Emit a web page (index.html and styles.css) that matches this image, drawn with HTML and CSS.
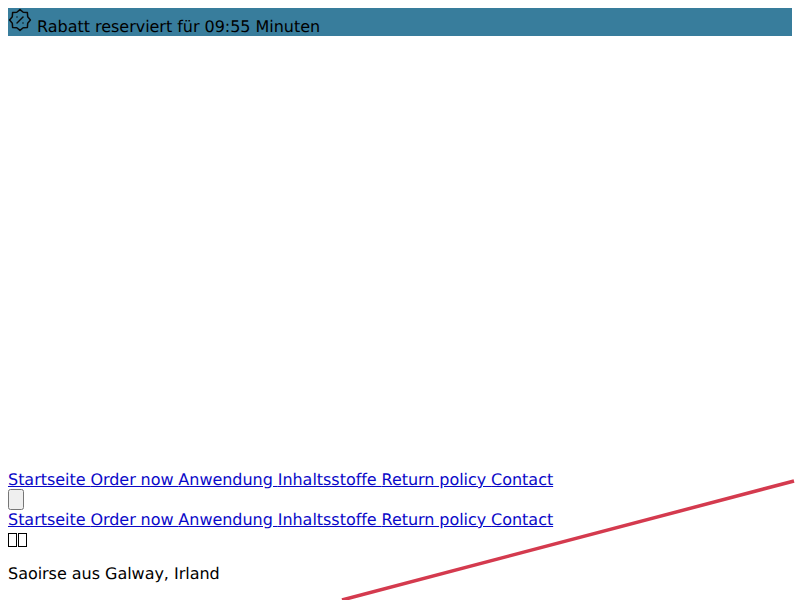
FILE: index.html
```html
<!DOCTYPE html>
<html lang="de">
  <head>
    <meta charset="utf-8" />
    <title>Rabatt</title>
    <link rel="stylesheet" href="styles.css">
  </head>
  <body>
    <!-- Promo bar -->
    <div class="promo-bar">
      <svg class="promo-icon" xmlns="http://www.w3.org/2000/svg" width="24" height="24" viewBox="0 0 24 24" fill="none" stroke="currentColor" stroke-width="1.5" stroke-linecap="round" stroke-linejoin="round">
        <path d="M12 1.6L15.2 4.3L19.4 4.6L19.7 8.8L22.4 12L19.7 15.2L19.4 19.4L15.2 19.7L12 22.4L8.8 19.7L4.6 19.4L4.3 15.2L1.6 12L4.3 8.8L4.6 4.6L8.8 4.3Z"></path>
        <path d="M15 9l-6 6"></path>
        <path d="M9 9h.01"></path>
        <path d="M15 15h.01"></path>
      </svg>
      <span>Rabatt reserviert für 09:55 Minuten</span>
    </div>

    <!-- Hero image never loaded, only its space is left -->
    <div class="hero-space"></div>

    <nav class="site-nav">
      <a href="#">Startseite </a><a href="#">Order now </a><a href="#">Anwendung </a><a href="#">Inhaltsstoffe </a><a href="#">Return policy </a><a href="#">Contact</a>
    </nav>
    <button class="menu-toggle" type="button"></button>
    <nav class="site-nav">
      <a href="#">Startseite </a><a href="#">Order now </a><a href="#">Anwendung </a><a href="#">Inhaltsstoffe </a><a href="#">Return policy </a><a href="#">Contact</a>
    </nav>

    <!-- Flag glyphs show as missing-character boxes -->
    <div class="flag"><span class="tofu"></span><span class="tofu"></span></div>
    <p class="review-author">Saoirse aus Galway, Irland</p>

    <!-- Red diagonal over the page -->
    <svg class="red-line" xmlns="http://www.w3.org/2000/svg" width="470" height="130" viewBox="0 0 470 130">
      <line x1="12" y1="130" x2="464" y2="11" stroke="#d43a4e" stroke-width="3.5"></line>
    </svg>
  </body>
</html>
```

FILE: styles.css
```css
html {
  overflow: hidden;
}

body {
  margin: 8px;
  font-family: "DejaVu Sans", sans-serif;
  font-size: 16px;
  letter-spacing: -0.03px;
  text-rendering: geometricPrecision;
  color: #000;
  background: #fff;
}

a {
  color: #0a08c8;
}

/* Promo bar */
.promo-bar {
  background: #387d9c;
  height: 28px;
}

.promo-icon {
  color: #0a0a0a;
}

.hero-space {
  height: 434px;
}

.site-nav {
  word-spacing: -0.2px;
}

.menu-toggle {
  display: block;
  width: 16px;
  height: 21px;
  padding: 0;
}

.flag {
  display: flex;
  gap: 1px;
  height: 15px;
  padding-top: 4px;
}

.tofu {
  width: 9px;
  height: 14px;
  border: 1px solid #000;
  box-sizing: border-box;
}

.review-author {
  margin: 16px 0;
}

.red-line {
  position: absolute;
  top: 470px;
  left: 330px;
}
```
